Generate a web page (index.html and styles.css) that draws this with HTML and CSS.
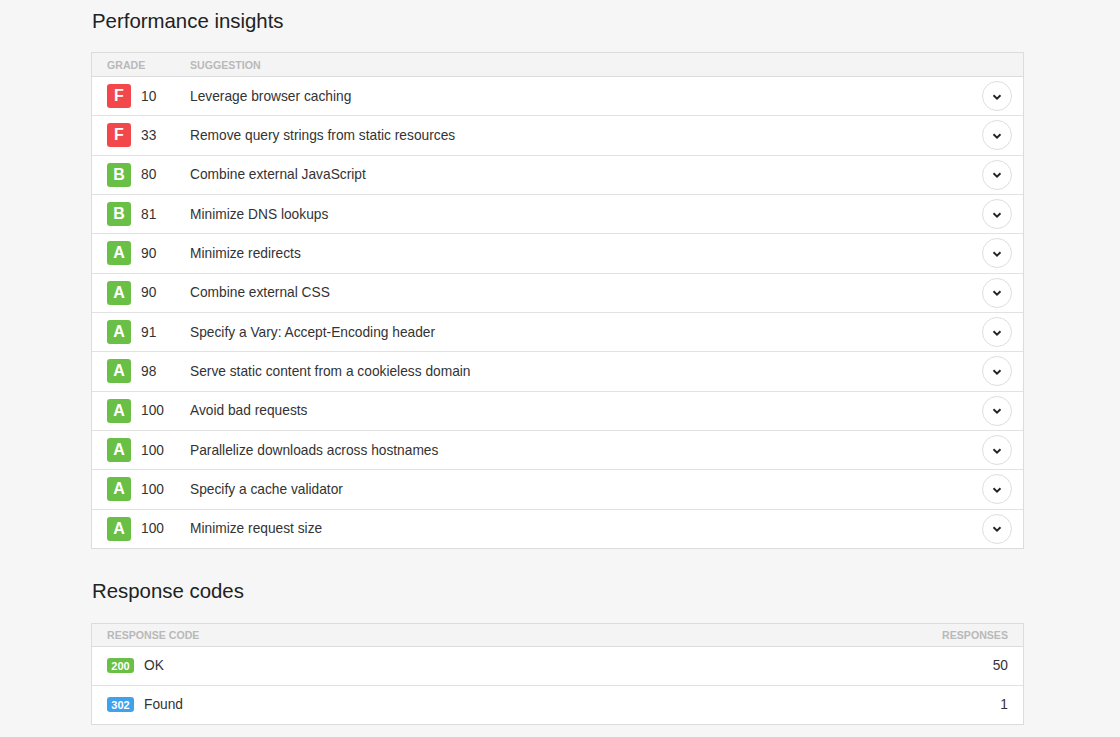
FILE: index.html
```html
<!DOCTYPE html>
<html>
<head>
<meta charset="utf-8">
<link rel="stylesheet" href="styles.css">
</head>
<body>
<div class="page">
  <h2 class="title">Performance insights</h2>
  <div class="table">
    <div class="thead">
      <div class="c-grade">Grade</div>
      <div class="c-sug">Suggestion</div>
    </div>
    <div class="row"><span class="grade f">F</span><span class="score">10</span><span class="sug">Leverage browser caching</span><span class="chev"><svg width="10" height="6" viewBox="0 0 10 6"><path d="M1.5 1.2 L5 4.6 L8.5 1.2" fill="none" stroke="#222" stroke-width="1.9"/></svg></span></div>
    <div class="row"><span class="grade f">F</span><span class="score">33</span><span class="sug">Remove query strings from static resources</span><span class="chev"><svg width="10" height="6" viewBox="0 0 10 6"><path d="M1.5 1.2 L5 4.6 L8.5 1.2" fill="none" stroke="#222" stroke-width="1.9"/></svg></span></div>
    <div class="row"><span class="grade ok">B</span><span class="score">80</span><span class="sug">Combine external JavaScript</span><span class="chev"><svg width="10" height="6" viewBox="0 0 10 6"><path d="M1.5 1.2 L5 4.6 L8.5 1.2" fill="none" stroke="#222" stroke-width="1.9"/></svg></span></div>
    <div class="row"><span class="grade ok">B</span><span class="score">81</span><span class="sug">Minimize DNS lookups</span><span class="chev"><svg width="10" height="6" viewBox="0 0 10 6"><path d="M1.5 1.2 L5 4.6 L8.5 1.2" fill="none" stroke="#222" stroke-width="1.9"/></svg></span></div>
    <div class="row"><span class="grade ok">A</span><span class="score">90</span><span class="sug">Minimize redirects</span><span class="chev"><svg width="10" height="6" viewBox="0 0 10 6"><path d="M1.5 1.2 L5 4.6 L8.5 1.2" fill="none" stroke="#222" stroke-width="1.9"/></svg></span></div>
    <div class="row"><span class="grade ok">A</span><span class="score">90</span><span class="sug">Combine external CSS</span><span class="chev"><svg width="10" height="6" viewBox="0 0 10 6"><path d="M1.5 1.2 L5 4.6 L8.5 1.2" fill="none" stroke="#222" stroke-width="1.9"/></svg></span></div>
    <div class="row"><span class="grade ok">A</span><span class="score">91</span><span class="sug">Specify a Vary: Accept-Encoding header</span><span class="chev"><svg width="10" height="6" viewBox="0 0 10 6"><path d="M1.5 1.2 L5 4.6 L8.5 1.2" fill="none" stroke="#222" stroke-width="1.9"/></svg></span></div>
    <div class="row"><span class="grade ok">A</span><span class="score">98</span><span class="sug">Serve static content from a cookieless domain</span><span class="chev"><svg width="10" height="6" viewBox="0 0 10 6"><path d="M1.5 1.2 L5 4.6 L8.5 1.2" fill="none" stroke="#222" stroke-width="1.9"/></svg></span></div>
    <div class="row"><span class="grade ok">A</span><span class="score">100</span><span class="sug">Avoid bad requests</span><span class="chev"><svg width="10" height="6" viewBox="0 0 10 6"><path d="M1.5 1.2 L5 4.6 L8.5 1.2" fill="none" stroke="#222" stroke-width="1.9"/></svg></span></div>
    <div class="row"><span class="grade ok">A</span><span class="score">100</span><span class="sug">Parallelize downloads across hostnames</span><span class="chev"><svg width="10" height="6" viewBox="0 0 10 6"><path d="M1.5 1.2 L5 4.6 L8.5 1.2" fill="none" stroke="#222" stroke-width="1.9"/></svg></span></div>
    <div class="row"><span class="grade ok">A</span><span class="score">100</span><span class="sug">Specify a cache validator</span><span class="chev"><svg width="10" height="6" viewBox="0 0 10 6"><path d="M1.5 1.2 L5 4.6 L8.5 1.2" fill="none" stroke="#222" stroke-width="1.9"/></svg></span></div>
    <div class="row"><span class="grade ok">A</span><span class="score">100</span><span class="sug">Minimize request size</span><span class="chev"><svg width="10" height="6" viewBox="0 0 10 6"><path d="M1.5 1.2 L5 4.6 L8.5 1.2" fill="none" stroke="#222" stroke-width="1.9"/></svg></span></div>
  </div>

  <h2 class="title title2">Response codes</h2>
  <div class="table table2">
    <div class="thead">
      <div class="c-code">Response code</div>
      <div class="c-resp">Responses</div>
    </div>
    <div class="row"><span class="code ok">200</span><span class="label">OK</span><span class="count">50</span></div>
    <div class="row"><span class="code blue">302</span><span class="label">Found</span><span class="count">1</span></div>
  </div>
</div>
</body>
</html>
```

FILE: styles.css
```css
* { box-sizing: border-box; }
html, body { margin: 0; padding: 0; }
body {
  background: #f6f6f6;
  font-family: "Liberation Sans", Arial, sans-serif;
  color: #333;
}
.page {
  width: 933px;
  margin-left: 91px;
  padding-top: 9px;
}
.title {
  margin: 0;
  font-size: 20.4px;
  font-weight: normal;
  color: #222;
  line-height: 24px;
  height: 43px;
  padding-left: 1px;
}
.title2 {
  margin-top: 30px;
  height: 44px;
}
.table {
  border: 1px solid #dcdcdc;
  background: #fff;
}
.thead {
  display: flex;
  align-items: center;
  height: 24px;
  background: #f4f4f4;
  border-bottom: 1px solid #dcdcdc;
  font-size: 10.6px;
  font-weight: bold;
  text-transform: uppercase;
  color: #b9b9b9;
  padding: 1px 15px 0 15px;
}
.c-grade { width: 83px; }
.c-code { flex: 1; }
.c-resp { text-align: right; }
.row {
  display: flex;
  align-items: center;
  height: 39.33px;
  border-top: 1px solid #e2e2e2;
  padding: 0 11px 0 15px;
  font-size: 13.75px;
  color: #333;
}
.thead + .row { border-top: none; height: 38.33px; }
.table2 .thead { height: 23px; }
.table2 .row { height: 39px; }
.table2 .thead + .row { height: 38px; }
.grade {
  width: 24px;
  height: 24px;
  border-radius: 3px;
  color: #fff;
  font-weight: bold;
  font-size: 16px;
  display: flex;
  align-items: center;
  justify-content: center;
  margin-right: 10px;
}
.f { background: #f2474b; }
.ok { background: #6abf47; }
.blue { background: #3fa2ec; }
.score { width: 49px; }
.sug { flex: 1; }
.chev {
  width: 30px;
  height: 30px;
  border-radius: 50%;
  border: 1px solid #dedede;
  display: flex;
  align-items: center;
  justify-content: center;
  padding-top: 1px;
}
.code {
  width: 27px;
  height: 15px;
  border-radius: 3px;
  color: #fff;
  font-size: 11px;
  font-weight: bold;
  display: flex;
  align-items: center;
  justify-content: center;
  margin-right: 10px;
}
.label { flex: 1; }
.count { padding-right: 4px; text-align: right; }
```
